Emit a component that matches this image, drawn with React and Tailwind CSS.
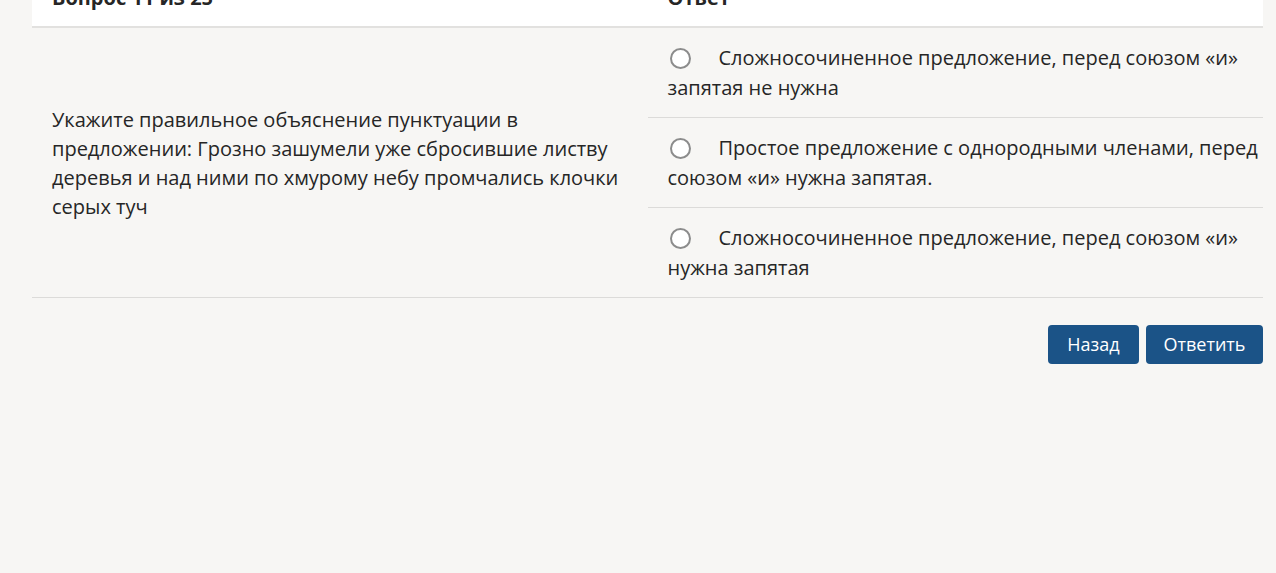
import React from "react";

const options = [
  "Сложносочиненное предложение, перед союзом «и» запятая не нужна",
  "Простое предложение с однородными членами, перед союзом «и» нужна запятая.",
  "Сложносочиненное предложение, перед союзом «и» нужна запятая",
];

function Radio() {
  return (
    <span className="inline-block align-middle w-[21px] h-[21px] rounded-full border-2 border-[#8c8c8c] bg-white ml-[2px] mr-[28px] -mt-[3px]" />
  );
}

export default function App() {
  return (
    <div
      className="min-h-[573px] bg-[#f7f6f4] text-[#262626] overflow-hidden"
      style={{ fontFamily: '"Open Sans", "Noto Sans", sans-serif' }}
    >
      <div className="ml-[32px] w-[1231px]">
        {/* header */}
        <div className="-mt-[34px] grid grid-cols-2 bg-white border-b-2 border-[#e2e1df] font-bold text-[20px] leading-[30px]">
          <div className="px-[20px] pt-[17px] pb-[13px]">Вопрос 11 из 25</div>
          <div className="px-[20px] pt-[17px] pb-[13px]">Ответ</div>
        </div>

        <div className="grid grid-cols-2 border-b border-[#dcdbd9]">
          <div className="flex items-center pl-[20px] pr-[10px] text-[20px] leading-[29px]">
            <p>
              Укажите правильное объяснение пунктуации в предложении: Грозно
              зашумели уже сбросившие листву деревья и над ними по хмурому
              небу промчались клочки серых туч
            </p>
          </div>
          <div className="flex flex-col">
            {options.map((text, i) => (
              <label
                key={i}
                className={`block pl-[20px] pt-[15px] pb-[14px] text-[20px] leading-[30px] ${
                  i < options.length - 1 ? "border-b border-[#dcdbd9]" : ""
                }`}
              >
                <Radio />
                {text}
              </label>
            ))}
          </div>
        </div>

        <div className="flex justify-end gap-[7px] mt-[27px]">
          <button className="h-[39px] w-[91px] rounded-[4px] bg-[#1b5387] text-white text-[18px]">
            Назад
          </button>
          <button className="h-[39px] w-[117px] rounded-[4px] bg-[#1b5387] text-white text-[18px]">
            Ответить
          </button>
        </div>
      </div>
    </div>
  );
}
